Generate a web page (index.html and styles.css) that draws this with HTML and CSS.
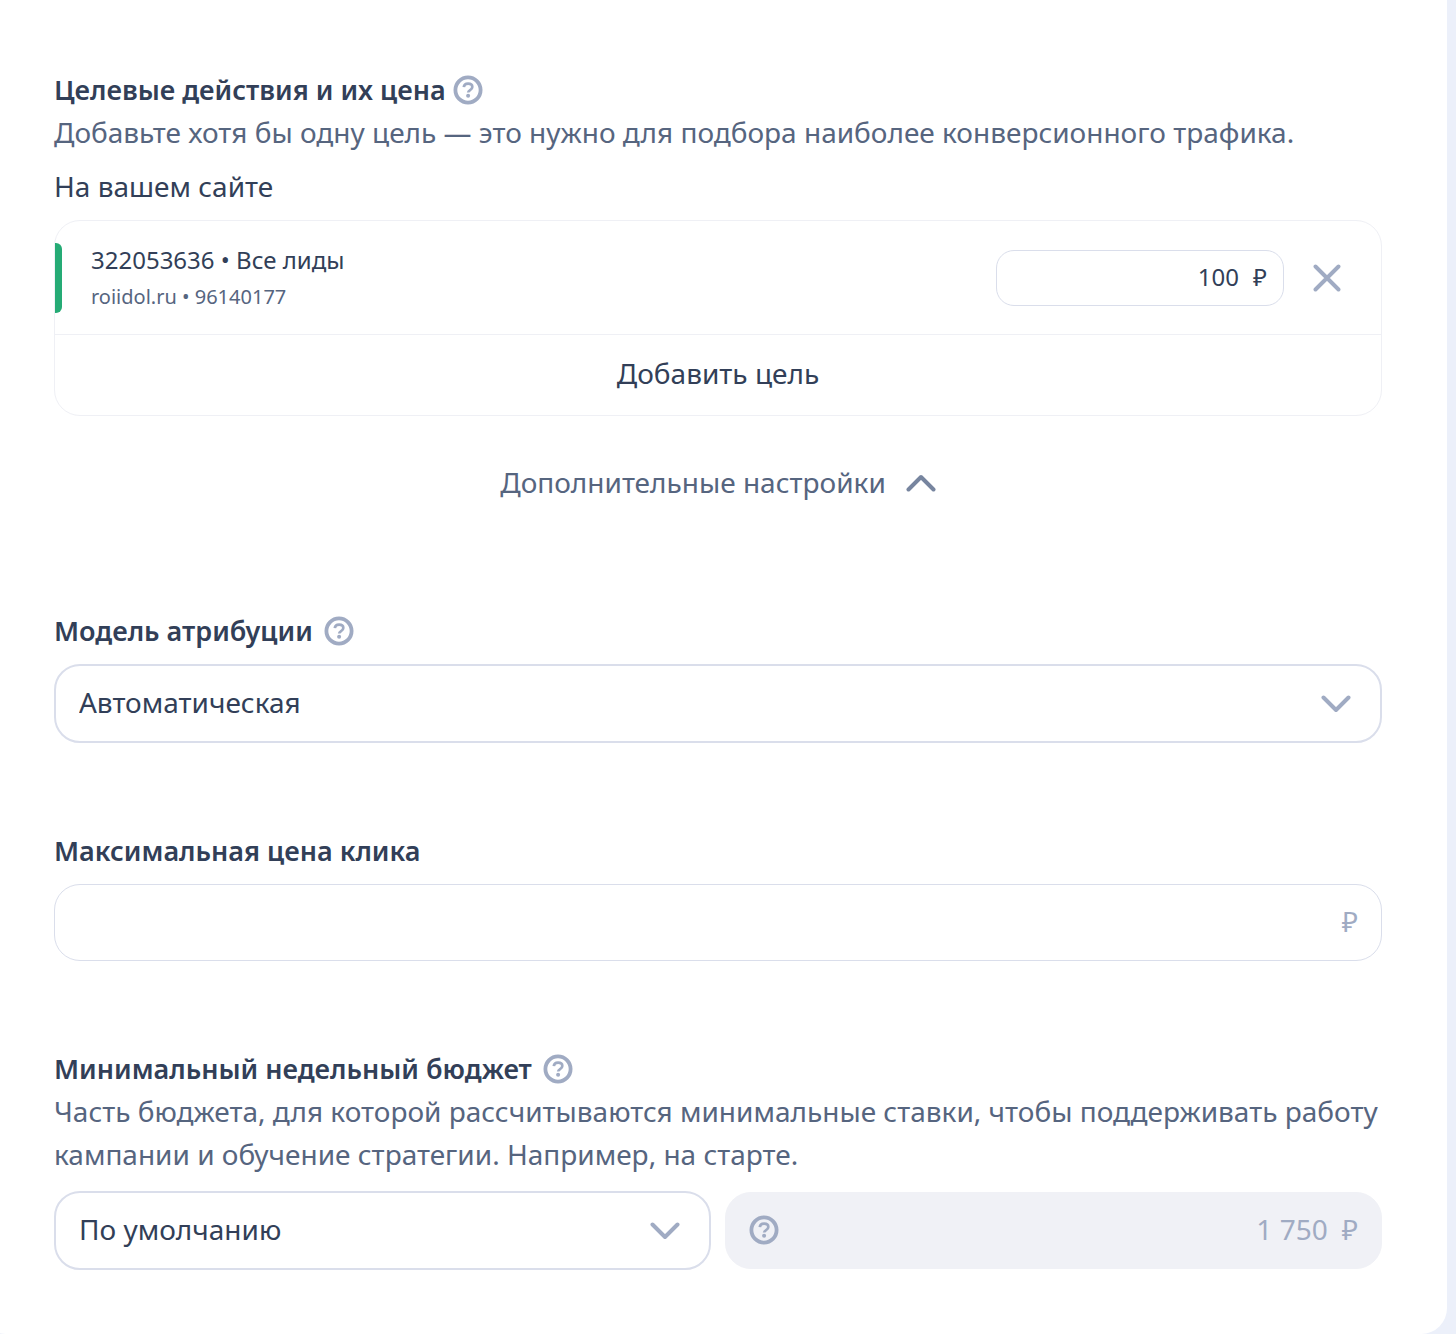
FILE: index.html
```html
<!DOCTYPE html>
<html lang="ru">
<head>
<meta charset="utf-8">
<meta name="viewport" content="width=device-width, initial-scale=1">
<title>Настройки кампании</title>
<link rel="stylesheet" href="styles.css">
</head>
<body>
<svg class="sprite" aria-hidden="true">
  <symbol id="icon-help" viewBox="0 0 30 30">
    <circle cx="15" cy="15" r="12.600" fill="none" stroke="currentColor" stroke-width="3.800"/>
    <path d="M10.800 12.200c.2-2.300 1.900-3.500 4.300-3.500 2.500 0 4.200 1.300 4.200 3.300 0 1.600-.8 2.300-2.200 3.100-1.300.8-1.900 1.200-1.900 2.500" fill="none" stroke="currentColor" stroke-width="2.700"/>
    <circle cx="15.100" cy="20.700" r="2" fill="currentColor"/>
  </symbol>
  <symbol id="icon-chevron" viewBox="0 0 30 18">
    <path d="M2.500 2.500 15 15 27.500 2.500" fill="none" stroke="currentColor" stroke-width="4" stroke-linecap="round" stroke-linejoin="round"/>
  </symbol>
  <symbol id="icon-close" viewBox="0 0 28 28">
    <path d="M2.500 2.500l23 23M25.500 2.500l-23 23" fill="none" stroke="currentColor" stroke-width="3.900" stroke-linecap="round"/>
  </symbol>
</svg>
<main class="panel">
  <section>
    <div class="heading heading-tight">
      <h2 class="title">Целевые действия и их цена</h2>
      <button class="icon-button" type="button" aria-label="Справка: целевые действия"><svg class="help"><use href="#icon-help"/></svg></button>
    </div>
    <p class="description">Добавьте хотя бы одну цель — это нужно для подбора наиболее конверсионного трафика.</p>
    <h3 class="subtitle">На вашем сайте</h3>
    <div class="goals">
      <div class="goal">
        <span class="goal-status"></span>
        <div class="goal-info">
          <div class="goal-name">322053636 • Все лиды</div>
          <div class="goal-source">roiidol.ru • 96140177</div>
        </div>
        <label class="field field-small">
          <input class="field-input" type="text" value="100" aria-label="Цена цели">
          <span>₽</span>
        </label>
        <button class="icon-button" type="button" aria-label="Удалить цель"><svg class="close"><use href="#icon-close"/></svg></button>
      </div>
      <button class="add-goal" type="button">Добавить цель</button>
    </div>
    <button class="toggle" type="button" aria-expanded="true">
      Дополнительные настройки
      <svg class="chevron chevron-up"><use href="#icon-chevron"/></svg>
    </button>
  </section>

  <section class="section-model">
    <div class="heading">
      <label class="title" for="model">Модель атрибуции</label>
      <button class="icon-button" type="button" aria-label="Справка: модель атрибуции"><svg class="help"><use href="#icon-help"/></svg></button>
    </div>
    <div class="select-box">
      <select class="select" id="model"><option>Автоматическая</option></select>
      <svg class="chevron"><use href="#icon-chevron"/></svg>
    </div>
  </section>

  <section class="section">
    <div class="heading">
      <label class="title" for="max-price">Максимальная цена клика</label>
    </div>
    <div class="field">
      <input class="field-input" id="max-price" type="text">
      <span class="unit">₽</span>
    </div>
  </section>

  <section class="section">
    <div class="heading">
      <label class="title" for="budget">Минимальный недельный бюджет</label>
      <button class="icon-button" type="button" aria-label="Справка: недельный бюджет"><svg class="help"><use href="#icon-help"/></svg></button>
    </div>
    <p class="description">Часть бюджета, для которой рассчитываются минимальные ставки, чтобы поддерживать работу кампании и обучение стратегии. Например, на старте.</p>
    <div class="budget">
      <div class="select-box">
        <select class="select" id="budget"><option>По умолчанию</option></select>
        <svg class="chevron"><use href="#icon-chevron"/></svg>
      </div>
      <div class="field field-disabled">
        <button class="icon-button" type="button" aria-label="Справка: сумма бюджета"><svg class="help"><use href="#icon-help"/></svg></button>
        <input class="field-input" type="text" value="1 750" aria-label="Сумма бюджета" disabled>
        <span class="unit">₽</span>
      </div>
    </div>
  </section>
</main>
</body>
</html>
```
FILE: styles.css
```css
:root {
  --text: #323f58;
  --muted: #56657f;
  --icon: #a0abc3;
  --border: #dadeeb;
  --divider: #eff0f5;
}

* {
  box-sizing: border-box;
}

body {
  margin: 0;
  background: #ecf0fa;
  color: var(--text);
  font-family: "Noto Sans", "Open Sans", sans-serif;
  font-size: 28px;
  line-height: 43px;
  overflow-x: hidden;
}

h2, h3, p {
  margin: 0;
}

button, input, select {
  margin: 0;
  padding: 0;
  border: 0;
  background: none;
  color: inherit;
  font: inherit;
}

svg {
  display: block;
}

.sprite {
  display: none;
}

.panel {
  margin: 0 9px 0 -20px;
  padding: 68px 65px 64px 74px;
  border-radius: 0 0 26px 26px;
  background: #fff;
}

.heading {
  display: flex;
  align-items: center;
  gap: 11px;
}

.heading-tight {
  gap: 7px;
}

.title {
  font-size: 27px;
  font-weight: 600;
}

.description {
  color: var(--muted);
}

.subtitle {
  margin: 11px 0 12px;
  font-size: 28px;
  font-weight: 400;
}

.icon-button {
  flex: none;
  color: var(--icon);
  cursor: pointer;
}

.help {
  width: 30px;
  height: 30px;
}

.close {
  width: 28px;
  height: 28px;
}

.chevron {
  width: 30px;
  height: 18px;
  color: var(--icon);
}

.chevron-up {
  color: #77859f;
  transform: rotate(180deg);
}

.goals {
  border: 1px solid var(--divider);
  border-radius: 26px;
}

.goal {
  display: flex;
  align-items: center;
  gap: 29px;
  height: 114px;
  padding-right: 40px;
  border-bottom: 1px solid var(--divider);
}

.goal-status {
  width: 7px;
  height: 70px;
  border-radius: 0 6px 6px 0;
  background: #25ab75;
}

.goal-info {
  flex: 1;
  line-height: 37px;
}

.goal-name {
  font-size: 24px;
}

.goal-source {
  color: var(--muted);
  font-size: 20px;
}

.add-goal {
  display: block;
  width: 100%;
  height: 80px;
  padding-bottom: 4px;
}

.toggle {
  display: flex;
  align-items: center;
  gap: 20px;
  margin: 45px auto 0;
  color: var(--muted);
}

.section-model {
  margin-top: 105px;
}

.section {
  margin-top: 86px;
}

.select-box {
  display: grid;
  align-items: center;
  margin-top: 12px;
}

.select-box > * {
  grid-area: 1 / 1;
}

.select-box .chevron {
  justify-self: end;
  margin-right: 31px;
  pointer-events: none;
}

.select {
  width: 100%;
  height: 79px;
  padding: 0 70px 2px 23px;
  border: 2px solid var(--border);
  border-radius: 26px;
  appearance: none;
}

.field {
  display: flex;
  align-items: center;
  gap: 14px;
  height: 77px;
  margin-top: 12px;
  padding: 0 23px 2px;
  border: 1px solid var(--border);
  border-radius: 26px;
}

.field-small {
  width: 288px;
  height: 56px;
  margin: 0;
  padding: 0 16px 2px;
  border-radius: 18px;
  font-size: 24px;
}

.field-input {
  flex: 1;
  min-width: 0;
  text-align: right;
}

.unit {
  color: var(--icon);
}

.field-disabled {
  border-color: #f0f1f6;
  background: #f0f1f6;
  color: var(--icon);
}

.budget {
  display: grid;
  grid-template-columns: 1fr 1fr;
  align-items: center;
  gap: 14px;
  margin-top: 15px;
}

.budget > * {
  margin-top: 0;
}
```
